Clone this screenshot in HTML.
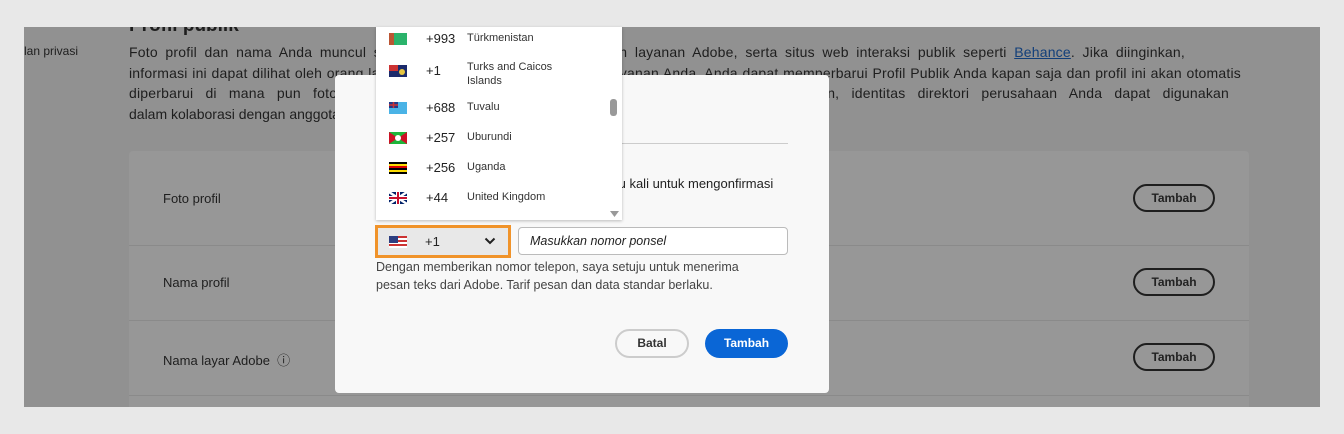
<!DOCTYPE html>
<html><head><meta charset="utf-8"><style>
*{margin:0;padding:0;box-sizing:border-box}
html,body{background:#e8e8e8}
body{width:1344px;height:434px;font-family:"Liberation Sans",sans-serif;position:relative;overflow:hidden;color:#222}
.ov{position:absolute;left:24px;top:27px;width:1296px;height:380px;overflow:hidden}
.abs{position:absolute}
.t{font-size:13px;color:#1e1e1e}
.ln{position:absolute;left:105px;font-size:14px;letter-spacing:0.2px;color:#1e1e1e;white-space:nowrap;text-align:justify;text-align-last:justify;height:20px;overflow:hidden}
.row{position:absolute;left:0;width:1120px;border-bottom:1px solid #8a8a8a}
.btn{position:absolute;left:1004px;width:82px;height:28px;border:2px solid #1e1e1e;border-radius:14px;font-size:12px;font-weight:bold;text-align:center;line-height:24px}
.modal{left:335px;top:75px;width:494px;height:318px;background:#f8f8f8;border-radius:4px}
.dd{left:376px;top:27px;width:246px;height:193px;background:#fff;box-shadow:0 1px 3px rgba(0,0,0,.25)}
.it{position:absolute;left:0;width:246px;height:30px;font-size:13px}
.it .f{position:absolute;left:13px;top:8px;width:18px;height:12px}
.it .c{position:absolute;left:50px;top:6px;color:#222}
.it .n{position:absolute;left:91px;top:7px;font-size:11px;color:#333}
</style></head><body>
<div class="ov">
  <svg class="abs" style="left:0;top:0" width="1296" height="380"><rect width="1296" height="380" fill="#919191"/><rect x="105" y="124" width="1120" height="270" rx="4" fill="#979797"/><rect x="105" y="218" width="1120" height="1" fill="#8a8a8a"/><rect x="105" y="293" width="1120" height="1" fill="#8a8a8a"/><rect x="105" y="368" width="1120" height="1" fill="#8a8a8a"/></svg>
  <div class="abs" style="left:105px;top:-12px;font-size:19px;font-weight:bold;color:#1e1e1e">Profil publik</div>
  <div class="abs t" style="left:0;top:17px;font-size:12px">lan privasi</div>
  <div class="ln" style="top:17px;width:1056px">Foto profil dan nama Anda muncul saat Anda menggunakan aplikasi dan layanan Adobe, serta situs web interaksi publik seperti <span style="color:#123f7a;text-decoration:underline">Behance</span>. Jika diinginkan,</div>
  <div class="ln" style="top:37.5px;width:1112px">informasi ini dapat dilihat oleh orang lain yang menggunakan aplikasi dan layanan Anda. Anda dapat memperbarui Profil Publik Anda kapan saja dan profil ini akan otomatis</div>
  <div class="ln" style="top:58px;width:1100px">diperbarui di mana pun foto profil dan nama Anda muncul. Jika Anda bagian dari perusahaan, identitas direktori perusahaan Anda dapat digunakan</div>
  <div class="abs" style="left:105px;top:78.5px;font-size:14px;color:#1e1e1e;white-space:nowrap">dalam kolaborasi dengan anggota lain.</div>
  <div class="abs" style="left:105px;top:124px;width:1120px;height:270px">
    <span class="abs t" style="left:34px;top:40px">Foto profil</span><div class="btn" style="top:33px">Tambah</div>
    <span class="abs t" style="left:34px;top:124px">Nama profil</span><div class="btn" style="top:117px">Tambah</div>
    <span class="abs t" style="left:34px;top:199px">Nama layar Adobe &nbsp;ⓘ</span><div class="btn" style="top:192px">Tambah</div>
  </div>
</div>
<div class="abs modal">
  <div class="abs" style="left:41px;top:68px;width:412px;height:1px;background:#ccc"></div>
  <div class="abs" style="left:280px;top:101px;font-size:13px;color:#222">tu kali untuk mengonfirmasi</div>
  <div class="abs" style="left:40px;top:150px;width:136px;height:33px;border:3px solid #f0932a;background:#e8e8e8">
    <svg class="abs" style="left:11px;top:8px" width="18" height="12"><rect width="18" height="12" fill="#c33"/><rect y="2" width="18" height="2" fill="#fff"/><rect y="6" width="18" height="2" fill="#fff"/><rect y="10" width="18" height="2" fill="#fff"/><rect width="9" height="7" fill="#2d3e80"/></svg>
    <span class="abs" style="left:47px;top:6px;font-size:13px">+1</span>
    <svg class="abs" style="left:106px;top:9px" width="12" height="8"><path d="M1.5 1.5L6 6l4.5-4.5" stroke="#222" stroke-width="2" fill="none"/></svg>
  </div>
  <div class="abs" style="left:183px;top:152px;width:270px;height:28px;border:1px solid #bbb;border-radius:4px;background:#fff;font-size:12.5px;font-style:italic;padding:6px 11px;color:#222">Masukkan nomor ponsel</div>
  <div class="abs" style="left:41px;top:183px;width:395px;font-size:12.5px;line-height:18px;color:#444">Dengan memberikan nomor telepon, saya setuju untuk menerima pesan teks dari Adobe. Tarif pesan dan data standar berlaku.</div>
  <div class="abs" style="left:280px;top:254px;width:74px;height:29px;border:2px solid #ccc;border-radius:15px;font-size:12px;font-weight:bold;text-align:center;line-height:25px;color:#333">Batal</div>
  <div class="abs" style="left:370px;top:254px;width:83px;height:29px;background:#0a66d6;border-radius:15px;font-size:12px;font-weight:bold;text-align:center;line-height:29px;color:#fff">Tambah</div>
</div>
<div class="abs dd">
  <div class="it" style="top:-2px"><svg class="f" viewBox="0 0 18 12"><rect width="18" height="12" fill="#2bb36b"/><rect width="5" height="12" fill="#b53"/></svg><span class="c">+993</span><span class="n">Türkmenistan</span></div>
  <div class="it" style="top:30px;height:34px"><svg class="f" viewBox="0 0 18 12"><rect width="18" height="12" fill="#1b2a6b"/><path d="M0 0h9v6H0z" fill="#c33"/><circle cx="13" cy="7" r="3" fill="#e6c640"/></svg><span class="c">+1</span><span class="n" style="top:3px;line-height:14px">Turks and Caicos<br>Islands</span></div>
  <div class="it" style="top:67px"><svg class="f" viewBox="0 0 18 12"><rect width="18" height="12" fill="#4ab3e6"/><path d="M0 0h9v6H0z" fill="#223a8a"/><path d="M0 3h9M4.5 0v6" stroke="#c33" stroke-width="1.5"/></svg><span class="c">+688</span><span class="n">Tuvalu</span></div>
  <div class="it" style="top:97px"><svg class="f" viewBox="0 0 18 12"><rect width="18" height="12" fill="#1eb53a"/><path d="M0 0l9 6L0 12zM18 0L9 6l9 6z" fill="#ce1126"/><circle cx="9" cy="6" r="3" fill="#fff"/></svg><span class="c">+257</span><span class="n">Uburundi</span></div>
  <div class="it" style="top:127px"><svg class="f" viewBox="0 0 18 12"><rect width="18" height="12" fill="#000"/><rect y="2" width="18" height="2" fill="#fcdc04"/><rect y="4" width="18" height="2" fill="#d90000"/><rect y="8" width="18" height="2" fill="#fcdc04"/></svg><span class="c">+256</span><span class="n">Uganda</span></div>
  <div class="it" style="top:157px"><svg class="f" viewBox="0 0 18 12"><rect width="18" height="12" fill="#012169"/><path d="M0 0l18 12M18 0L0 12" stroke="#fff" stroke-width="2.5"/><path d="M9 0v12M0 6h18" stroke="#fff" stroke-width="4"/><path d="M9 0v12M0 6h18" stroke="#c8102e" stroke-width="2"/></svg><span class="c">+44</span><span class="n">United Kingdom</span></div>
  <div class="abs" style="left:234px;top:72px;width:7px;height:17px;background:#999;border-radius:3px"></div>
  <svg class="abs" style="left:234px;top:184px" width="9" height="6"><path d="M0 0h9L4.5 6z" fill="#999"/></svg>
</div>
</body></html>
